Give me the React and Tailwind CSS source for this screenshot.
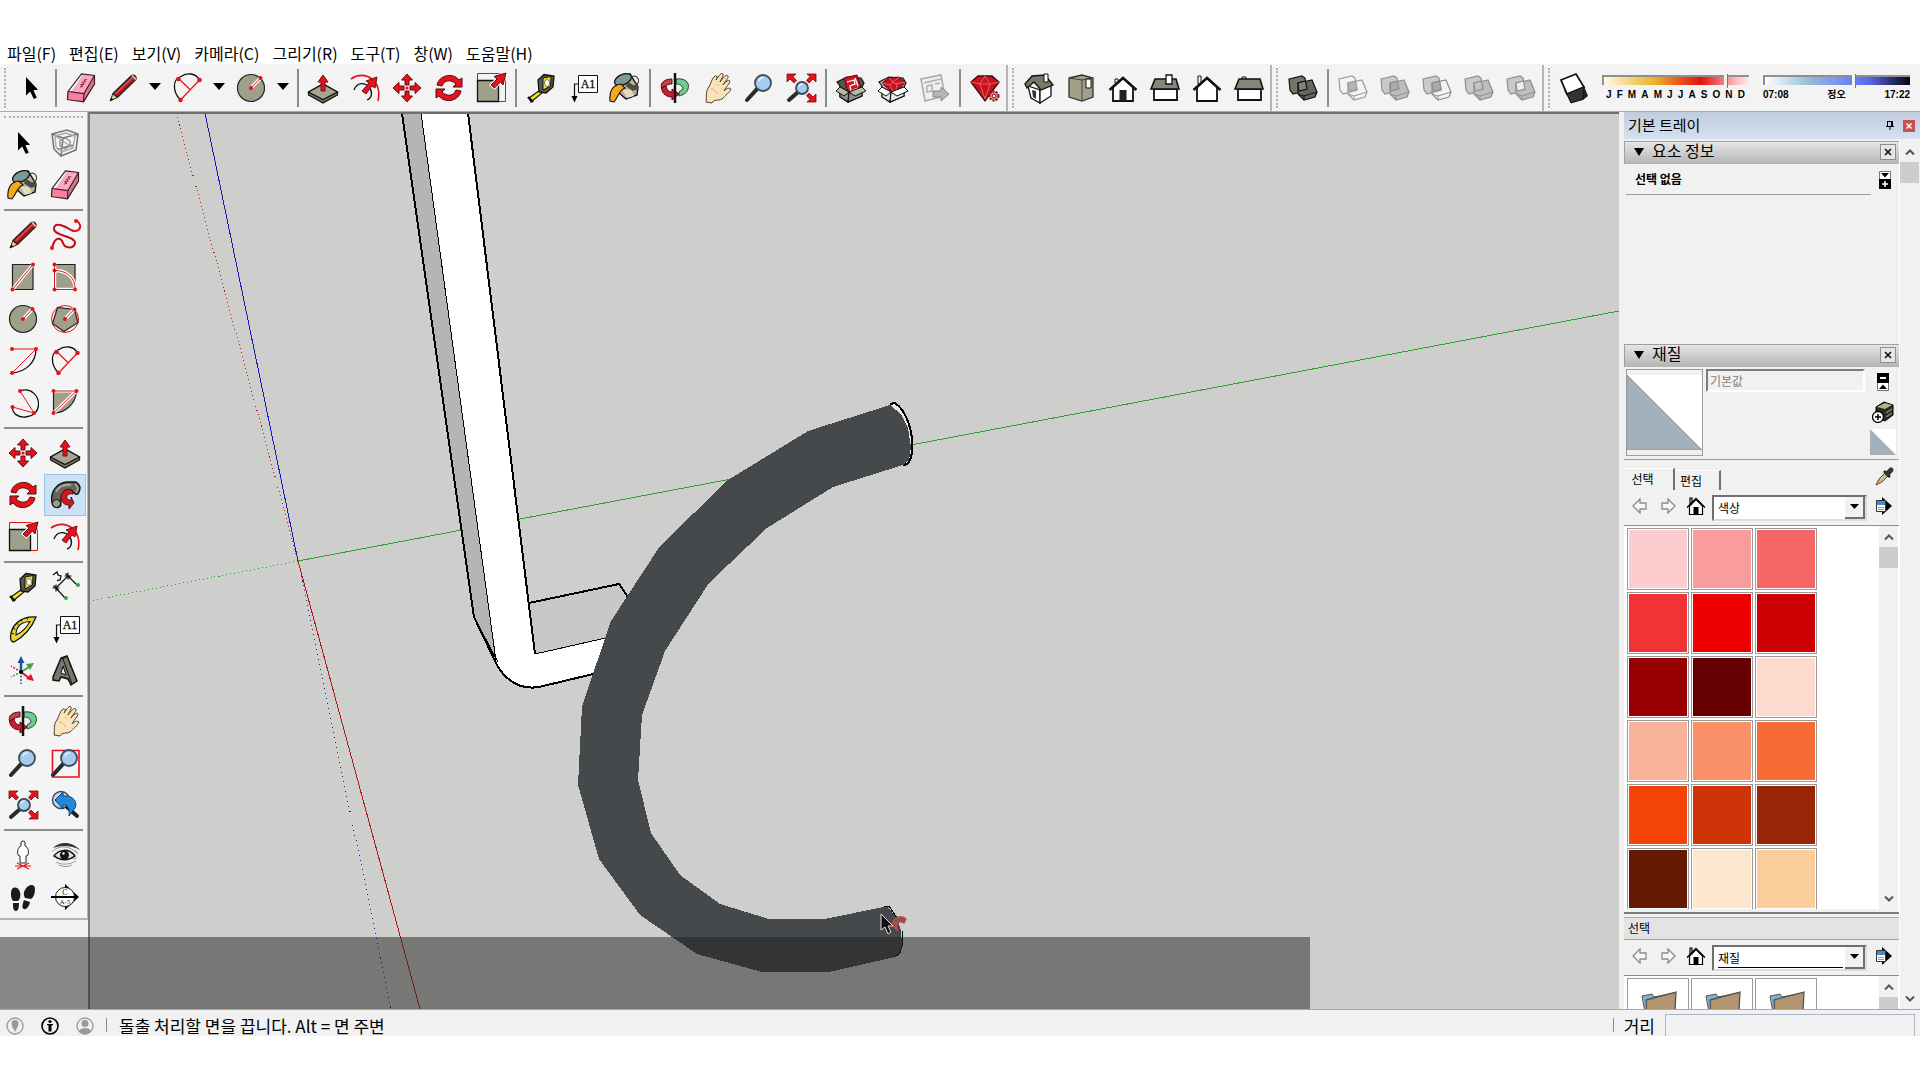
import React from 'react';

const RED = '#e1141e';
const OLIVE = '#9f9f8a';

function Icon({ children, className = 'h-8 w-8' }) {
  return (
    <svg viewBox="0 0 32 32" className={`${className} shrink-0`} fill="none" aria-hidden="true">
      {children}
    </svg>
  );
}

function Dots({ points, r = 2 }) {
  return points.map(([x, y]) => <circle key={`${x}-${y}`} cx={x} cy={y} r={r} fill={RED} />);
}

function SelectIcon() {
  return (
    <Icon>
      <path d="M11 5V23.5L15.2 19.6L18.8 27L21.8 25.6L18.4 18.2L23 17.8Z" fill="#000" />
    </Icon>
  );
}

function EraserIcon() {
  return (
    <Icon>
      <path d="M7 19L18 2.5L29.5 4L20 21.5Z" fill="#f9a9c0" />
      <path d="M20 21.5L29.5 4L29 12L18.5 30Z" fill="#d9728f" />
      <path d="M2 21.5L7 19L20 21.5L18.5 30L3 26.5Z" fill="#fb7f9c" />
      <path d="M3 19.5L16.5 2L29.5 3.5V12L18.5 29.8L2.5 27.5ZM3 19.5L19 21.5L29.5 3.5M19 21.5L18.5 29.8" stroke="#3a1a22" strokeWidth="1.2" />
      <path d="M15 15l3-.6-2.4-1.8 3.6-.4-2-2 3.4-.3-1.5-2 3-.2" stroke="#8a2540" strokeWidth="1" />
    </Icon>
  );
}

function PencilIcon() {
  return (
    <Icon>
      <path d="M3 29L6 21.5L10.5 25.5Z" fill="#e8cd9a" stroke="#222" />
      <path d="M6 21.5L24.5 3.5C27 2 30 4.5 29 7.5L10.5 25.5Z" fill="#a8181c" stroke="#222" strokeWidth="1.2" />
      <path d="M8.5 22L25.5 5.5" stroke="#e4504f" strokeWidth="1.6" />
      <path d="M25 3.5l4 4" stroke="#d9b0a8" strokeWidth="2" />
      <path d="M3 29l1.4-3.4 2 1.8z" fill="#111" />
    </Icon>
  );
}

function FreehandIcon() {
  return (
    <Icon>
      <path d="M3 29C6 17 12 18 14 24C16 30 25 30 26 24C27 17 5 17 5 10C5 2 16 7 22 11C28 14 32 10 31 6C30 3 28 2 27 1" stroke={RED} strokeWidth="2" />
      <path d="M3 29C6 17 12 18 14 24C16 30 25 30 26 24C27 17 5 17 5 10C5 2 16 7 22 11" stroke="#7d0b12" strokeWidth=".7" />
      <Dots points={[[3, 29], [27, 2]]} />
    </Icon>
  );
}

function RectIcon() {
  return (
    <Icon>
      <path d="M5.5 3.5H26V28.5H5.5Z" fill={OLIVE} stroke="#222" strokeWidth="1.2" />
      <path d="M5.5 28.5L26 3.5" stroke="#fff" strokeWidth="3.4" />
      <path d="M5.5 28.5L26 3.5" stroke={RED} />
      <Dots points={[[5.5, 28.5], [26, 3.5]]} />
    </Icon>
  );
}

function RotatedRectIcon() {
  return (
    <Icon>
      <path d="M5.5 3.5H26V28.5H5.5Z" fill={OLIVE} stroke="#222" strokeWidth="1.2" />
      <path d="M5.5 3.5V28.5H26C27 17 17 9 5.5 9.5" stroke="#fff" strokeWidth="3.4" />
      <path d="M5.5 3.5V28.5H26C27 17 17 9 5.5 9.5" stroke={RED} />
      <Dots points={[[5.5, 3.5], [5.5, 9.5], [5.5, 28.5], [26, 28.5]]} />
    </Icon>
  );
}

function CircleIcon() {
  return (
    <Icon>
      <circle cx="16" cy="16" r="13.5" fill={OLIVE} stroke="#222" strokeWidth="1.2" />
      <path d="M16 16L25.5 6" stroke="#fff" strokeWidth="3.4" />
      <path d="M16 16L25.5 6" stroke={RED} />
      <Dots points={[[16, 16], [25.5, 6]]} />
    </Icon>
  );
}

function PolygonIcon() {
  return (
    <Icon>
      <circle cx="16" cy="16" r="13.5" stroke={RED} />
      <path d="M25.5 6.5L29 19.5L15 28.5L3.5 20.5L8.5 4.5Z" fill={OLIVE} stroke="#222" strokeWidth="1.2" />
      <path d="M16 16L25.5 6" stroke="#fff" strokeWidth="3.4" />
      <path d="M16 16L25.5 6" stroke={RED} />
      <Dots points={[[16, 16], [25.5, 6.5]]} />
    </Icon>
  );
}

function ArcIcon() {
  return (
    <Icon>
      <path d="M5 28C18 27 29 18 29 4" stroke="#111" strokeWidth="1.3" />
      <path d="M5 4H29L5 28" stroke={RED} />
      <Dots points={[[5, 4], [29, 4], [5, 28]]} />
    </Icon>
  );
}

function TwoPointArcIcon() {
  return (
    <Icon>
      <path d="M9.5 28C0 18 3 7 9 5C16 0 25 1 28.5 8" stroke="#111" strokeWidth="1.3" />
      <path d="M9.5 28L28.500 8M7.500 6.500L19.500 18" stroke={RED} strokeWidth="1.2" />
      <Dots points={[[9.5, 28], [28.5, 8], [7.5, 7]]} r={2.3} />
    </Icon>
  );
}

function ThreePointArcIcon() {
  return (
    <Icon>
      <path d="M13 4C24 0 32 9 31.5 18C31 25 26 29 19 30C11 31 5 26 5.5 20" stroke="#111" strokeWidth="1.3" />
      <path d="M13 4L27 26L5.5 20" stroke={RED} />
      <Dots points={[[13, 4], [27, 26], [5.5, 20]]} />
    </Icon>
  );
}

function PieIcon() {
  return (
    <Icon>
      <path d="M4.5 4H27.5C27 16 17 26 4.5 26Z" fill={OLIVE} stroke="#222" strokeWidth="1.2" />
      <path d="M27.5 4H4.500M27.500 4L4.500 26" stroke="#fff" strokeWidth="3.2" />
      <path d="M4.5 4H27.5L4.5 26" stroke={RED} />
      <Dots points={[[4.5, 4], [27.5, 4], [4.5, 26]]} />
    </Icon>
  );
}

function PushPullIcon() {
  return (
    <Icon>
      <path d="M1.5 20L16 12L30.5 20V23L16 31L1.5 23Z" fill="#6f6f60" stroke="#111" strokeWidth="1.2" />
      <path d="M1.5 20L16 12L30.5 20L16 27.5Z" fill="#a5a592" stroke="#111" strokeWidth="1.2" />
      <path d="M16 3L21 10H18V19H14V10H11Z" fill={RED} stroke="#7d0b12" />
    </Icon>
  );
}

function OffsetIcon() {
  return (
    <Icon>
      <path d="M2 7C16-3 34 9 29 29" stroke={RED} strokeWidth="1.6" />
      <path d="M5 18C8 10 16 10 20 15C24 20 23 26 18 28" stroke="#111" strokeWidth="1.3" />
      <path d="M13 19L20 11L17 9L28 5L26 16L23 14L17 22Z" fill={RED} stroke="#7d0b12" />
    </Icon>
  );
}

function MoveIcon() {
  return (
    <Icon>
      {[0, 90, 180, 270].map((angle) => (
        <path key={angle} transform={`rotate(${angle} 16 16)`} d="M16 2L21.5 8H18V13H14V8H10.5Z" fill={RED} stroke="#6d0a10" />
      ))}
      <circle cx="16" cy="16" r="1.6" fill={RED} />
    </Icon>
  );
}

function RotateIcon() {
  return (
    <Icon>
      <path d="M4 13C6 3 20 0 26 8L29 6V15H20L23 12C18 7 11 8 9 14Z" fill={RED} stroke="#5b080d" />
      <path d="M28 19C26 29 12 32 6 24L3 26V17H12L9 20C14 25 21 24 23 18Z" fill={RED} stroke="#5b080d" />
    </Icon>
  );
}

function FollowMeIcon() {
  return (
    <Icon>
      <path d="M3 24C1 13 7 4 18 3L27 3C31 5 32 9 30 13C29 16 27 16 25 14L22 11C15 9 11 15 12 25C12 30 4 30 3 24Z" fill="#66665c" stroke="#111" strokeWidth="1.3" />
      <path d="M7 13C10 7 15 5 22 6" stroke="#a9a99a" strokeWidth="2" />
      <path d="M12 17C13 12 18 9 23 11L24 15C20 14 17 16 18 20L22 22V18L25 24L20 30V26C15 26 12 23 12 17Z" fill="#d11a22" stroke="#5b080d" />
      <ellipse cx="7.5" cy="24.5" rx="4" ry="4" fill="#9c9c8c" stroke="#111" />
      <path d="M26 5l3 4-2 5" stroke="#a9a99a" strokeWidth="1.5" />
    </Icon>
  );
}

function ScaleIcon() {
  return (
    <Icon>
      <path d="M2.5 1.5H30.5V29.5H2.5Z" stroke={RED} />
      <path d="M2.5 8.5H23.5V29.5H2.5Z" fill={OLIVE} stroke="#111" strokeWidth="1.3" />
      <path d="M16 13L22 7L19 4.5L31 1L28 13L25.5 10L19.5 16Z" fill={RED} stroke="#fff" strokeWidth="2.5" />
      <path d="M16 13L22 7L19 4.5L31 1L28 13L25.5 10L19.5 16Z" fill={RED} stroke="#5b080d" />
    </Icon>
  );
}

function TapeIcon() {
  return (
    <Icon>
      <path d="M4 26L15 18L17 21L6 30Z" fill="#f2e21b" stroke="#111" strokeWidth="1.2" />
      <path d="M3 25L8 30" stroke="#111" strokeWidth="2.4" />
      <path d="M13 8L19 2.5L29 4L28 15L21 21L14 20Z" fill="#55554d" stroke="#111" strokeWidth="1.3" />
      <path d="M18 6L26 4.5L25.5 14L18 18Z" fill="#f2e21b" stroke="#111" />
      <ellipse cx="22" cy="11" rx="2.5" ry="3.5" fill="#fff" stroke="#777" />
    </Icon>
  );
}

function DimensionIcon() {
  return (
    <Icon>
      <path d="M7 17L19 5M19 5L29 15M7 17L16 27" stroke="#111" strokeWidth="1.2" />
      <path d="M3.5 17h7M7 13.5v7M4.5 14.5l5 5M15.5 5h7M19 1.5v7M16.5 2.5l5 5" stroke="#111" strokeWidth="1.2" />
      <path d="M4 4l4-3 1 3 3 1-1 4-3 .5" stroke="#111" strokeWidth="1.3" />
      <circle cx="29" cy="14" r="2" fill="#3fa046" />
      <circle cx="17" cy="27" r="2" fill="#3fa046" />
    </Icon>
  );
}

function ProtractorIcon() {
  return (
    <Icon>
      <path d="M3.5 24C4 12 14 3 29 4C25 14 18 23 7 29C4 29 3.500 27 3.500 24Z" fill="#e8d53a" stroke="#111" strokeWidth="1.3" />
      <path d="M9 22C9 14 14 9 23 8.5C20 14 16 19 9 22Z" fill="#f3f3f3" stroke="#111" strokeWidth="1.1" />
      <path d="M4.500 20l2.500 1M6 15l2.500 1.500M9.500 10l2 2M14 6.500l1 2M20 4.500l.5 2" stroke="#111" />
    </Icon>
  );
}

function TextIcon() {
  return (
    <Icon>
      <path d="M11.5 3.5H30.5V20.5H11.5Z" fill="#fff" stroke="#111" />
      <path d="M11 12H7.5V25" stroke="#111" strokeWidth="1.2" />
      <path d="M4.5 24H10.5L7.5 30.5Z" fill="#000" />
      <text x="21" y="16" textAnchor="middle" fontFamily="Liberation Serif, serif" fontSize="12" fill="#111" stroke="#111" strokeWidth=".3">A1</text>
    </Icon>
  );
}

function AxesIcon() {
  return (
    <Icon>
      <path d="M14 17V6" stroke="#1d4fa5" strokeWidth="2.5" />
      <path d="M14 1l3.500 7h-7z" fill="#1d4fa5" />
      <path d="M14 17L22 12" stroke="#3fa046" strokeWidth="2" />
      <path d="M27 8l-8 1 4 6z" fill="#3fa046" />
      <path d="M14 17L22 23" stroke={RED} strokeWidth="2" />
      <path d="M27 26l-3-7-5 5z" fill={RED} />
      <path d="M14 17L4 11" stroke={RED} strokeWidth="1.5" strokeDasharray="2 1.5" />
      <path d="M14 17L4 22" stroke="#3fa046" strokeWidth="1.5" strokeDasharray="2 1.5" />
      <path d="M14 17V29" stroke="#1d4fa5" strokeWidth="1.5" strokeDasharray="2 1.5" />
      <circle cx="14" cy="17" r="2" fill="#000" />
    </Icon>
  );
}

function Text3dIcon() {
  return (
    <Icon>
      <path d="M4 22L12 3L18 1L28 26L22 30L19 24L12 22L10 26L4 25Z" fill="#76766a" stroke="#111" strokeWidth="1.5" />
      <path d="M12 18L14 11L17 20Z" fill="#f3f3f3" stroke="#111" />
      <path d="M14 4l9 25M12 3l2 1 4-3" stroke="#111" />
    </Icon>
  );
}

function PaintIcon() {
  return (
    <Icon>
      <path d="M8 8L21 2L29 15L28 23L17 27L10 21Z" fill="#b9b097" stroke="#111" strokeWidth="1.4" />
      <ellipse cx="14" cy="7.500" rx="9" ry="5" transform="rotate(-24 14 7.5)" fill="#7d979a" stroke="#111" strokeWidth="1.300" />
      <path d="M18 12L24 16L29 15" stroke="#4d4a40" strokeWidth="5" />
      <path d="M22 5C29 2 32 9 27 14" stroke="#444" strokeWidth="1.200" />
      <path d="M13 17L18 26L25 24L22 18Z" fill="#e3dcc2" />
      <path d="M1 29C0 20 3 13 12 12L16 16C10 18 10 24 5 30Z" fill="#f6a81c" stroke="#111" strokeWidth="1.1" />
    </Icon>
  );
}

function OrbitIcon() {
  return (
    <Icon>
      <path d="M17 7C26 6 31 10 29 17C28 21 24 23 20 24V20L24 17C24 14 21 12 17 12Z" fill="#74c894" stroke="#154d2a" />
      <path d="M13 7C5 7 1 11 2.5 16L7 14C9 12 11 12 13 12Z" fill="#bb4248" stroke="#5b080d" />
      <path d="M2.5 16C3 22 8 25 13 25V28L20 22L13 17V20C10 20 8 18 7 14Z" fill="#cb1c33" stroke="#5b080d" />
      <path d="M16 1V31" stroke="#111" strokeWidth="2.5" />
    </Icon>
  );
}

function PanIcon() {
  return (
    <Icon>
      <path d="M5 30C6 25 4 20 8 15C10 11 11 6 14 4C16 3 17 5 15 8C18 4 20 0 22 2C23 4 20 7 19 10C22 6 25 2 27 4C28 6 24 9 22 13C24 10 28 7 29 9C29 11 25 15 23 19C25 17 28 15 30 17C29 20 24 24 21 27C17 29 13 27 11 31Z" fill="#fbe3b9" stroke="#4c4130" />
      <path d="M10 17c3 0 5 2 6 5M16 12l2 2" stroke="#d7b47c" />
    </Icon>
  );
}

function Lens({ x = 20, y = 11, r = 8, ex = 4, ey = 28 }) {
  return (
    <>
      <path d={`M${x - r * 0.7} ${y + r * 0.7}L${ex} ${ey}`} stroke="#2a2a2a" strokeWidth="4" strokeLinecap="round" />
      <circle cx={x} cy={y} r={r} fill="#a5cbee" stroke="#3a4b5c" strokeWidth="1.8" />
      <path d={`M${x - r * 0.5} ${y - r * 0.2}a${r * 0.6} ${r * 0.6} 0 0 1 ${r * 0.6} ${-r * 0.45}`} stroke="#e5f2fb" strokeWidth="1.5" />
    </>
  );
}

function ZoomIcon() {
  return (
    <Icon>
      <Lens />
    </Icon>
  );
}

function ZoomWindowIcon() {
  return (
    <Icon>
      <path d="M3.5 3.5H30V30H3.5Z" stroke={RED} strokeWidth="1.6" />
      <Lens />
    </Icon>
  );
}

function ZoomExtentsIcon() {
  return (
    <Icon>
      <Lens x={17} y={16} r={6} />
      <path d="M2 2h9l-3 2.5 3.500 4-2.500 2.500-4-4-3 3z" fill={RED} stroke="#7d0b12" strokeWidth=".8" />
      <path d="M31 2h-9l3 2.5-3.500 4 2.500 2.500 4-4 3 3z" fill={RED} stroke="#7d0b12" strokeWidth=".8" />
      <path d="M31 30h-9l3-2.5-3.500-4 2.500-2.500 4 4 3-3z" fill={RED} stroke="#7d0b12" strokeWidth=".8" />
    </Icon>
  );
}

function PreviousViewIcon() {
  return (
    <Icon>
      <circle cx="12" cy="11" r="8.5" fill="#c5daea" stroke="#3a4b5c" strokeWidth="1.5" />
      <path d="M18 18L28 27" stroke="#222" strokeWidth="4" strokeLinecap="round" />
      <path d="M6 11L14 3V7C24 6 29 13 26 19L20 27C21 20 19 16 14 16V20Z" fill="#2387dd" stroke="#0f3e70" />
    </Icon>
  );
}

function CameraIcon() {
  return (
    <Icon>
      <path d="M14 4a2 2 0 1 1 4 0v3c3 1 4 5 3 9l-2 1v7h-6v-7l-2-1c-1-4 0-8 3-9z" fill="#fff" stroke="#222" />
      <path d="M10 24L22 30M22 24L10 30M8 27H24" stroke={RED} strokeWidth="1.2" />
    </Icon>
  );
}

function EyeIcon() {
  return (
    <Icon>
      <path d="M4 9C11 2 23 2 31 11C23 6 12 6 4 9Z" fill="#333" />
      <path d="M5 17C10 10 20 9 26 17C19 22 12 22 5 17Z" fill="#ddd" stroke="#111" strokeWidth="1.5" />
      <circle cx="15.5" cy="16" r="4.5" fill="#111" />
      <circle cx="14.5" cy="14.5" r="1.2" fill="#fff" />
      <path d="M3 13C9 6 21 6 29 15M7 23c6 3 13 3 20-1M10 26c5 2 9 2 13 0M26 11l3 4M24 20l4-1" stroke="#999" />
    </Icon>
  );
}

function WalkIcon() {
  return (
    <Icon>
      <path d="M4 12C4 5 11 5 13 11C14 15 13 18 11 20L6 20C4 17 4 15 4 12ZM6 22L12 22C12 27 11 30 9 30C6 30 6 26 6 22Z" fill="#1b1b1b" />
      <path d="M28 8C28 2 21 3 18 9C16 12 17 15 18 17L24 18C27 16 28 12 28 8ZM17 19L23 21C22 26 19 29 17 28C14 27 16 22 17 19Z" fill="#1b1b1b" />
      <path d="M5 21h7M17 18l7 2" stroke="#fff" strokeWidth="1.5" strokeDasharray="2 1" />
    </Icon>
  );
}

function SectionIcon() {
  return (
    <Icon>
      <path d="M16 3L30 16L16 29Z" fill="#000" />
      <circle cx="16" cy="16" r="9.5" fill="#fff" stroke="#222" />
      <path d="M2 16H29" stroke="#000" strokeWidth="2" />
      <text x="16" y="14" textAnchor="middle" fontFamily="Liberation Serif, serif" fontSize="8" fill="#111">C</text>
      <text x="16" y="23" textAnchor="middle" fontFamily="Liberation Serif, serif" fontSize="7" fill="#111">A-5</text>
    </Icon>
  );
}

function ComponentIcon() {
  return (
    <Icon>
      <path d="M3 7L18 3L29 7L27 23L12 29L5 22ZM3 7L14 11L12 29M14 11L29 7" stroke="#777" strokeWidth="1.6" />
      <path d="M6 9L17 6L26 9L24 21L13 25L7 20ZM6 9L14 14L24 21" stroke="#aaa" strokeWidth="1.4" />
      <path d="M11 14l5-3 5 3v5l-5 3-5-3zM8 22l16-4" stroke="#8c8c8c" strokeWidth="1.3" />
    </Icon>
  );
}

function WarehouseIcon({ gem = false }) {
  const box = gem ? '#e6e6e6' : '#8f8f80';
  return (
    <Icon>
      <path d="M5 14L2 10L12 5L26 6L29 11L27 15V24L13 30L5 25Z" fill={gem ? '#bdbdbd' : '#55554c'} stroke="#111" strokeWidth="1.2" />
      {gem ? (
        <>
          <path d="M5 11L12 6L22 5L28 10L18 23Z" fill="#c1121d" stroke="#4a0609" />
          <path d="M5 11L13 13L22 5M12 6L18 12L28 10M13 13L18 23L20 12" stroke="#f0656b" />
        </>
      ) : (
        <>
          <path d="M9 6L22 3L27 19L14 24Z" fill="#d2151f" stroke="#5b080d" />
          <path d="M12 10l7-2 1 4-5 2 1 5M20 6l3 8M18 18l5-2" stroke="#fff" strokeWidth="1.3" />
        </>
      )}
      <path d="M5 15L14 20L13 30L5 25Z" fill={box} stroke="#111" strokeWidth="1.1" />
      <path d="M14 21L27 15V24L13 30Z" fill={box} stroke="#111" strokeWidth="1.1" />
      <path d="M5 15L1 19L9 24L14 20ZM27 15L31 19L20 24L14 20Z" fill={gem ? '#fff' : '#b7b7a8'} stroke="#111" />
    </Icon>
  );
}

function ShareIcon() {
  return (
    <Icon>
      <path d="M2 7L22 3L26 24L6 29Z" fill="#eee" stroke="#aaa" strokeWidth="1.5" />
      <path d="M5 11L22 7M8 14l5-1v6l-5 1zM16 12l5-1" stroke="#b0b0b0" strokeWidth="1.5" />
      <path d="M14 19H22V15L30 22L22 29V25H14Z" fill="#b5b5b5" stroke="#888" />
    </Icon>
  );
}

function ExtensionIcon() {
  return (
    <Icon>
      <path d="M2 10L9 4H23L30 10L16 29Z" fill="#c31420" stroke="#4a0609" strokeWidth="1.3" />
      <path d="M2 10L11 12L16 4L21 12L30 10M11 12L16 27L21 12Z" stroke="#f0565d" />
      <circle cx="25" cy="24" r="4.5" fill="#d98d90" stroke="#8b141a" strokeWidth="2" strokeDasharray="2 1.2" />
      <circle cx="25" cy="24" r="1.8" fill="#fff" stroke="#8b141a" />
    </Icon>
  );
}

function IsoIcon() {
  return (
    <Icon>
      <path d="M5 14L17 18V31L8 26Z" fill="#fff" stroke="#111" strokeWidth="1.3" />
      <path d="M17 18L28 11V24L17 31Z" fill="#fff" stroke="#111" strokeWidth="1.3" />
      <path d="M2 12L9 4L22 3L30 13L18 18L11 10L4 16Z" fill="#77776a" stroke="#111" strokeWidth="1.3" />
      <path d="M21 2h4v8h-4z" fill="#fff" stroke="#111" />
      <path d="M9 18l4 1v8l-3-2z" fill="#333" />
    </Icon>
  );
}

function TopIcon() {
  return (
    <Icon>
      <path d="M4 6L17 3L28 6V25L17 29L4 25Z" fill={OLIVE} stroke="#333" strokeWidth="1.3" />
      <path d="M17 8V29M4 6L17 8L28 6" stroke="#44443c" />
      <path d="M21 7h5v9h-5z" fill="#fff" stroke="#111" />
    </Icon>
  );
}

function HouseIcon({ door = false }) {
  return (
    <Icon>
      {!door && <path d="M7 4h3v8H7z" fill="#fff" stroke="#111" />}
      {door && <path d="M8 7h3v4H8z" fill="#fff" stroke="#111" />}
      <path d="M6 15L16 6L26 15V29H6Z" fill="#fff" stroke="#111" strokeWidth="1.8" />
      <path d="M2.5 18L16 6L29.5 18" stroke="#111" strokeWidth="2.5" />
      {door && <path d="M12.5 18H19.5V29H12.5Z" fill="#222" />}
    </Icon>
  );
}

function SideIcon({ chimney = 'right' }) {
  return (
    <Icon>
      <path d="M5 17H28V28H5Z" fill="#fff" stroke="#111" strokeWidth="1.8" />
      {chimney === 'left' && <path d="M9 5h4v4H9z" fill="#fff" stroke="#111" />}
      <path d="M6 7H27L30 17H2Z" fill="#85857a" stroke="#111" strokeWidth="1.6" />
      {chimney === 'right' && <path d="M17 3h6v9h-6z" fill="#fff" stroke="#111" strokeWidth="1.3" />}
    </Icon>
  );
}

function SolidIcon({ a = '#c9c9c9', b = '#bdbdbd', stroke = '#8e8e8e', mid = 'none' }) {
  return (
    <Icon>
      <path d="M2 7L15 4L18 6L20 18L6 22L3 18Z" fill={a} stroke={stroke} strokeWidth="1.2" />
      <path d="M11 11L25 8L30 20L28 25L17 28L11 22Z" fill={b} stroke={stroke} strokeWidth="1.2" />
      <path d="M11 22L17 24L30 20M17 24V28" stroke={stroke} />
      <path d="M11 11L18.500 9L20 17L12 19Z" fill={mid} stroke={stroke} strokeWidth="1.2" />
    </Icon>
  );
}

function ShadowIcon() {
  return (
    <Icon>
      <path d="M5 18L25 14L29 24L24 28L12 31Z" fill="#222" />
      <path d="M2 8L17 2L25 15L8 22Z" fill="#fff" stroke="#111" strokeWidth="1.8" />
      <path d="M8 22L12 31L24 27L25 15Z" fill="#333" stroke="#111" />
    </Icon>
  );
}

const UnionIcon = () => <SolidIcon a="#74746a" b="#66665b" stroke="#111" mid="#83837a" />;

const toolbarGroups = [
  [
    ['선택', SelectIcon], '|', ['지우개', EraserIcon], ['선', PencilIcon, true], ['호', TwoPointArcIcon, true], ['원', CircleIcon, true], '|',
    ['밀기/당기기', PushPullIcon], ['간격띄우기', OffsetIcon], ['이동', MoveIcon], ['회전', RotateIcon], ['배율', ScaleIcon], '|',
    ['줄자', TapeIcon], ['텍스트', TextIcon], ['페인트 통', PaintIcon], '|',
    ['궤도', OrbitIcon], ['이동 보기', PanIcon], ['확대', ZoomIcon], ['범위 확대', ZoomExtentsIcon], '|',
    ['3D Warehouse', WarehouseIcon], ['Extension Warehouse', () => <WarehouseIcon gem />], ['모델 공유', ShareIcon], '|',
    ['확장 관리자', ExtensionIcon],
  ],
  [
    ['등각', IsoIcon], ['맨 위', TopIcon], ['앞', () => <HouseIcon door />], ['오른쪽', SideIcon], ['뒤', HouseIcon],
    ['왼쪽', () => <SideIcon chimney="left" />],
  ],
  [
    ['외피', UnionIcon], '|',
    ['교차', () => <SolidIcon a="none" b="none" mid="#b5b5b5" stroke="#999" />],
    ['결합', () => <SolidIcon mid="#aaa" />],
    ['빼기', () => <SolidIcon b="none" mid="#aaa" />],
    ['트림', () => <SolidIcon mid="#c4c4c4" />],
    ['분할', () => <SolidIcon mid="#eee" />],
  ],
];

const paletteGroups = [
  [['선택', SelectIcon], ['구성요소', ComponentIcon], ['페인트 통', PaintIcon], ['지우개', EraserIcon]],
  [
    ['선', PencilIcon], ['자유곡선', FreehandIcon], ['사각형', RectIcon], ['회전된 사각형', RotatedRectIcon], ['원', CircleIcon],
    ['다각형', PolygonIcon], ['호', ArcIcon], ['2점 호', TwoPointArcIcon], ['3점 호', ThreePointArcIcon], ['원형 차트', PieIcon],
  ],
  [['이동', MoveIcon], ['밀기/당기기', PushPullIcon], ['회전', RotateIcon], ['따라가기', FollowMeIcon, true], ['배율', ScaleIcon], ['간격띄우기', OffsetIcon]],
  [['줄자', TapeIcon], ['치수', DimensionIcon], ['각도기', ProtractorIcon], ['텍스트', TextIcon], ['축', AxesIcon], ['3D 텍스트', Text3dIcon]],
  [['궤도', OrbitIcon], ['이동 보기', PanIcon], ['확대', ZoomIcon], ['창 확대', ZoomWindowIcon], ['범위 확대', ZoomExtentsIcon], ['이전', PreviousViewIcon]],
  [['카메라 배치', CameraIcon], ['둘러보기', EyeIcon], ['걷기', WalkIcon], ['단면', SectionIcon]],
];

const menus = ['파일(F)', '편집(E)', '보기(V)', '카메라(C)', '그리기(R)', '도구(T)', '창(W)', '도움말(H)'];

const swatches = [
  'bg-[#fccdce]', 'bg-[#fa9b9d]', 'bg-[#f66667]',
  'bg-[#f23336]', 'bg-[#ee0000]', 'bg-[#cd0004]',
  'bg-[#990003]', 'bg-[#660003]', 'bg-[#fddacd]',
  'bg-[#fab39b]', 'bg-[#fa9067]', 'bg-[#f76b35]',
  'bg-[#f34306]', 'bg-[#ce3408]', 'bg-[#982606]',
  'bg-[#661a04]', 'bg-[#fde6ce]', 'bg-[#fbcd9a]',
];

function ToolButton({ label, icon: Glyph, active = false }) {
  return (
    <button
      type="button"
      aria-label={label}
      className={[
        'flex h-[42px] w-[42px] items-center justify-center border',
        active ? 'border-[#9ac5ea] bg-[#cbe2f6]' : 'border-transparent',
      ].join(' ')}
    >
      <Glyph />
    </button>
  );
}

function Toolbar() {
  return (
    <div className="flex h-12 shrink-0 items-stretch border-b border-[#a8a8a8] bg-[#f3f3f3] pt-px">
      {toolbarGroups.map((group, i) => (
        <div key={i} className="flex items-center border-r-2 border-[#b4b4b4]">
          <div className="mr-1 ml-1 h-10 border-l-2 border-dotted border-[#b0b0b0]" />
          {group.map((item, j) => {
            if (item === '|') {
              return <div key={j} className="mx-[3px] h-[38px] w-0.5 bg-[#8c8c8c]" />;
            }
            const [label, Glyph, split] = item;
            return (
              <div key={j} className="flex items-center">
                <ToolButton label={label} icon={Glyph} />
                {split ? (
                  <button type="button" aria-label={`${label} 목록`} className="flex w-[22px] justify-center pb-1">
                    <svg viewBox="0 0 12 7" className="h-[7px] w-3" aria-hidden="true">
                      <path d="M0 0H12L6 7Z" fill="#000" />
                    </svg>
                  </button>
                ) : null}
              </div>
            );
          })}
        </div>
      ))}

      <div className="flex flex-1 items-center pr-2.5">
        <div className="mr-1 ml-1 h-10 border-l-2 border-dotted border-[#b0b0b0]" />
        <ToolButton label="그림자" icon={ShadowIcon} />
        <div className="flex flex-1 gap-3.5 pl-1.5 font-['Liberation_Sans','Noto_Sans_CJK_KR',sans-serif] text-[10px] leading-3 font-bold text-black">
          <div className="flex-1">
            <input
              type="range"
              aria-label="날짜"
              min="0"
              max="100"
              defaultValue="85"
              className="block h-2.5 w-full appearance-none border-t-2 border-l-2 border-[#8f8f8f] [background-image:linear-gradient(to_right,#fffbe8,#f2cf74_20%,#eeb02b_35%,#e8561c_52%,#e3120f_67%,#f26a6e_80%,#f7b6bb_90%,#ffecee)] [&::-webkit-slider-thumb]:h-3.5 [&::-webkit-slider-thumb]:w-1 [&::-webkit-slider-thumb]:appearance-none [&::-webkit-slider-thumb]:border-r [&::-webkit-slider-thumb]:border-[#777] [&::-webkit-slider-thumb]:bg-[#f3f3f3]"
            />
            <div className="mt-1 flex justify-between px-1">
              {'JFMAMJJASOND'.split('').map((month, i) => (
                <span key={i}>{month}</span>
              ))}
            </div>
          </div>
          <div className="flex-1">
            <input
              type="range"
              aria-label="시간"
              min="0"
              max="100"
              defaultValue="62"
              className="block h-2.5 w-full appearance-none border-t-2 border-l-2 border-[#8f8f8f] [background-image:linear-gradient(to_right,#fff,#93bdd8_30%,#6d86f2_58%,#5c66ec_72%,#20265c_90%,#05050a)] [&::-webkit-slider-thumb]:h-3.5 [&::-webkit-slider-thumb]:w-1 [&::-webkit-slider-thumb]:appearance-none [&::-webkit-slider-thumb]:border-r [&::-webkit-slider-thumb]:border-[#777] [&::-webkit-slider-thumb]:bg-[#f3f3f3]"
            />
            <div className="mt-1 flex justify-between">
              <span>07:08</span>
              <span>정오</span>
              <span>17:22</span>
            </div>
          </div>
        </div>
      </div>
    </div>
  );
}

function Palette() {
  return (
    <div className="w-[90px] shrink-0 border-r-2 border-[#7b7b7b] bg-[#f1f1f1]">
      <div className="border-r border-b-2 border-[#b4b4b4] bg-[#f4f4f4] px-0.5 pt-1">
        <div className="mx-0.5 mb-1 border-t-2 border-dotted border-[#b0b0b0]" />
        {paletteGroups.map((group, i) => (
          <div key={i}>
            {i > 0 ? <div className="mx-0.5 my-[3px] h-0.5 bg-[#8c8c8c]" /> : null}
            <div className="grid grid-cols-[42px_42px]">
              {group.map(([label, Glyph, active]) => (
                <ToolButton key={label} label={label} icon={Glyph} active={active} />
              ))}
            </div>
          </div>
        ))}
      </div>
    </div>
  );
}

function Viewport() {
  return (
    <div className="min-w-0 flex-1 border-t-2 border-[#6e6e6c] bg-[#cececc]">
      <svg viewBox="90 114 1529 895" preserveAspectRatio="xMinYMin slice" className="block h-full w-full" fill="none" shapeRendering="crispEdges" aria-label="모델">
        <path d="M176 113L298 561" stroke="#b02020" strokeDasharray="1 3" />
        <path d="M298 561L89 601" stroke="#2f9a2f" strokeDasharray="1 3" />
        <path d="M298 561L391 1009" stroke="#1c1c90" strokeDasharray="1 4" />
        <path d="M298 561L1619 311" stroke="#30a030" />
        <path d="M205 113L298 561" stroke="#1a1ab4" />
        <path d="M298 561L420 1009" stroke="#b01818" />

        <path d="M529 603L619 584L640 610V640L535 655Z" fill="#c8c8c8" />
        <path d="M402 113H422L497 664L474 617Z" fill="#b5b5b5" />
        <path d="M421 113H468L535 654L610 637V670L539 687C520 690 507 682 497 665Z" fill="#fff" />
        <path d="M421 113L496 661M474 617L498 662M535 654L610 637" stroke="#000" />
        <path d="M402 113L474 617L497 665C507 682 520 690 539 687L610 670M468 113L535 654M529 603L619 584L630 600" stroke="#000" strokeWidth="2" />

        <path d="M890 404L895 403C906 410 914 432 912 452C911 460 908 465 903 465" fill="#e8e8e8" stroke="#000" strokeWidth="2" />
        <path
          d="M890 405L808 431L728 480L660 546L611 621L582 706L578 785L599 859L640 915L697 954L762 972H829L895 957L900 952L902 945L901 931L897 918L888 907H883L825 919L769 919L720 904L680 875L651 833L638 780L642 715L665 651L709 583L767 528L833 487L903 465L909 460L911 447L908 428L901 414Z"
          fill="#45494b"
        />
        <path d="M884 907L889 906L897 918M902 931V946L900 953L895 957" stroke="#000" />

        <g shapeRendering="auto">
          <path d="M893 926C891 919 900 914 906 919L904 923C899 920 896 923 897 930Z" fill="#7d5a52" stroke="#d0443e" strokeWidth="1.5" />
          <path d="M881 914V930L885 927L888 934L891 932L888 926H893Z" fill="#111" stroke="#ddd" />
        </g>
      </svg>
    </div>
  );
}

function CloseButton({ label }) {
  return (
    <button type="button" aria-label={label} className="flex h-4 w-4 items-center justify-center border border-[#8e8e8e] bg-[#e6e6e6]">
      <svg viewBox="0 0 8 8" className="h-2 w-2" aria-hidden="true">
        <path d="M1 1L7 7M7 1L1 7" stroke="#111" strokeWidth="1.6" />
      </svg>
    </button>
  );
}

function SectionHeader({ title }) {
  return (
    <div className="flex h-[23px] shrink-0 items-center border-t border-l border-[#a0a0a0] bg-linear-to-b from-[#e6e6e6] to-[#b4b4b4] pr-[3px] pb-0.5 pl-[9px]">
      <svg viewBox="0 0 10 8" className="h-2 w-2.5" aria-hidden="true">
        <path d="M0 0H10L5 8Z" fill="#000" />
      </svg>
      <h2 className="ml-2 flex-1 pb-1 text-[16px] leading-4 text-black">{title}</h2>
      <CloseButton label={`${title} 닫기`} />
    </div>
  );
}

function Chevron({ up = false }) {
  return (
    <svg viewBox="0 0 10 6" className="h-1.5 w-2.5" fill="none" aria-hidden="true">
      <path d={up ? 'M1 5.5L5 1.5L9 5.5' : 'M1 .5L5 4.5L9 .5'} stroke="#555" strokeWidth="2" />
    </svg>
  );
}

function ScrollBar({ down = true }) {
  return (
    <div className="flex w-[19px] shrink-0 flex-col items-center bg-[#f1f1f1]">
      <button type="button" aria-label="위로 스크롤" className="flex h-[21px] shrink-0 items-center">
        <Chevron up />
      </button>
      <div className="h-[21px] w-full shrink-0 bg-[#cdcdcd]" />
      {down ? (
        <button type="button" aria-label="아래로 스크롤" className="mt-auto flex h-[21px] items-center">
          <Chevron />
        </button>
      ) : null}
    </div>
  );
}

function ToggleIcon({ down = false }) {
  return (
    <svg viewBox="0 0 12 18" className="h-[18px] w-3" aria-hidden="true">
      <path d="M.5 .5H11.5V17.5H.5Z" fill="#fff" stroke="#777" />
      {down ? (
        <>
          <path d="M2 2H10L6 6.5ZM0 8H12V18H0Z" fill="#000" />
          <path d="M3 13H9M6 10V16" stroke="#fff" strokeWidth="1.5" />
        </>
      ) : (
        <>
          <path d="M0 0H12V10H0ZM2 16H10L6 11.5Z" fill="#000" />
          <path d="M3 5H9" stroke="#fff" strokeWidth="2" />
        </>
      )}
    </svg>
  );
}

function NavRow({ id, options, focused = false }) {
  return (
    <div className="flex h-9 shrink-0 items-center border-b border-[#8e8e8e] pr-1.5 pl-2">
      {[false, true].map((flip) => (
        <button key={String(flip)} type="button" aria-label={flip ? '앞으로' : '뒤로'} className="flex w-7 justify-start pb-1">
          <svg viewBox="0 0 16 16" className="h-4 w-4" fill="#f6f6f6" aria-hidden="true">
            <path d={flip ? 'M15 8L8 1V5H2V11H8V15Z' : 'M1 8L8 1V5H14V11H8V15Z'} stroke="#8a8a8a" strokeWidth="1.3" />
          </svg>
        </button>
      ))}
      <button type="button" aria-label="모델 내" className="mr-1.5 -ml-0.5 pb-1">
        <svg viewBox="0 0 20 20" className="h-5 w-5" fill="#fff" aria-hidden="true">
          <path d="M4 2H6V8H4ZM3.5 10L10 3.5L16.5 10V18.5H3.5Z" stroke="#000" strokeWidth="1.2" />
          <path d="M1 11.5L10 2.5L19 11.5" fill="none" stroke="#000" strokeWidth="1.3" />
          <path d="M7.500 11H12.500V18H7.500Z" fill="#000" />
        </svg>
      </button>
      <div className="relative flex-1">
        <select
          id={id}
          aria-label="재질 모음"
          className="block h-[26px] w-full appearance-none border-2 border-[#707070] border-r-[#dcdcdc] border-b-[#dcdcdc] bg-white pl-1 text-[12px] leading-5 text-black"
        >
          {options.map((option) => (
            <option key={option}>{option}</option>
          ))}
        </select>
        {focused ? <div className="pointer-events-none absolute right-6 bottom-[3px] left-1.5 h-px bg-black" /> : null}
        <div className="pointer-events-none absolute top-0.5 right-0.5 bottom-0.5 flex w-5 items-center justify-center border-r-2 border-b-2 border-[#707070] bg-[#f1f1f1]">
          <svg viewBox="0 0 9 5" className="h-[5px] w-[9px]" aria-hidden="true">
            <path d="M0 0H9L4.5 5Z" fill="#000" />
          </svg>
        </div>
      </div>
      <button type="button" aria-label="세부정보" className="ml-2 pb-1">
        <svg viewBox="0 0 18 18" className="h-[18px] w-[18px]" aria-hidden="true">
          <path d="M7 0L17 9L7 18Z" fill="#000" />
          <path d="M1.5 3.5H10.5V14.5H1.5Z" fill="#fff" stroke="#333" />
          <path d="M2 4H10V8H2Z" fill="#4b86cf" />
          <path d="M3 10.5H9M3 12.5H9" stroke="#999" />
        </svg>
      </button>
    </div>
  );
}

function Folder() {
  return (
    <svg viewBox="0 0 60 60" className="h-full w-full" aria-hidden="true">
      <path d="M14 17L24 15L26 18L46 14V50H20Z" fill="#7fb0d6" stroke="#555" />
      <path d="M18 21L48 13L46 50H20Z" fill="#b39670" stroke="#555" strokeWidth="1.3" />
    </svg>
  );
}

function Tray() {
  return (
    <aside className="ml-[5px] flex w-[296px] shrink-0 flex-col bg-[#f1f1f1]">
      <div className="flex h-[27px] shrink-0 items-center bg-linear-to-b from-[#c0ccdc] to-[#d5e1f0] pr-[5px] pl-1">
        <h1 className="flex-1 pb-0.5 text-[15px] leading-5 text-black">기본 트레이</h1>
        <button type="button" aria-label="고정" className="mr-[9px]">
          <svg viewBox="0 0 8 9" className="h-[9px] w-2" fill="none" aria-hidden="true">
            <path d="M1.500 0V5M2 .5H6M0 5.5H8M4 6V9" stroke="#000" />
            <path d="M6 0V5" stroke="#000" strokeWidth="2" />
          </svg>
        </button>
        <button type="button" aria-label="트레이 닫기" className="flex h-3 w-3 items-center justify-center bg-[#c75050]">
          <svg viewBox="0 0 6 6" className="h-1.5 w-1.5" aria-hidden="true">
            <path d="M.5 .5L5.5 5.5M5.5 .5L.5 5.5" stroke="#fff" strokeWidth="1.5" />
          </svg>
        </button>
      </div>

      <div className="flex min-h-0 flex-1">
        <div className="flex min-w-0 flex-1 flex-col border-r border-white pt-0.5">
          <SectionHeader title="요소 정보" />
          <div className="h-[180px] shrink-0 pr-2 pl-0.5">
            <div className="flex">
              <p className="h-[31px] flex-1 border-b border-[#9c9c9c] pl-[9px] text-[12px] leading-[30px] font-bold text-black">선택 없음</p>
              <button type="button" aria-label="세부정보 표시" className="ml-2">
                <ToggleIcon down />
              </button>
            </div>
          </div>

          <SectionHeader title="재질" />
          <div className="flex h-[93px] shrink-0 items-start border-b border-[#9c9c9c] pt-0.5 pr-[3px] pl-0.5">
            <div className="h-[87px] w-[77px] border border-[#9c9c9c] py-[5px]">
              <svg viewBox="0 0 75 75" className="block h-[75px] w-[75px]" aria-hidden="true">
                <path d="M0 0H75V75H0Z" fill="#fff" />
                <path d="M0 0L75 75H0Z" fill="#a4b0b9" stroke="#8e979e" />
              </svg>
            </div>
            <input
              type="text"
              aria-label="재질 이름"
              defaultValue="기본값"
              className="ml-[3px] h-[23px] min-w-0 flex-1 border-2 border-[#7d7d7d] border-r-white border-b-white bg-[#f1f1f1] pl-0.5 text-[12px] leading-5 text-[#808080]"
            />
            <div className="ml-[5px] flex w-[26px] flex-col items-center gap-2.5 pt-1">
              <ToggleIcon />
              <svg viewBox="0 0 22 22" className="h-[22px] w-[22px]" aria-hidden="true">
                <path d="M4 6L12 1L21 4V14L13 20L4 16Z" fill="#2b2b22" stroke="#000" />
                <path d="M5 6L13 2L20 4L13 8Z" fill="#b9b08c" />
                <path d="M14 12L20 8M14 16L20 12" stroke="#8d8668" strokeWidth="1.5" />
                <circle cx="6" cy="16" r="5.5" fill="#fff" stroke="#000" strokeWidth="1.3" />
                <path d="M3 16H9M6 13V19" stroke="#000" strokeWidth="1.5" />
              </svg>
              <svg viewBox="0 0 26 26" className="-mt-1 h-[26px] w-[26px]" aria-hidden="true">
                <path d="M0 0H26V26H0Z" fill="#fff" />
                <path d="M0 0L26 26H0Z" fill="#a4b0b9" />
              </svg>
            </div>
          </div>

          <div className="flex h-[30px] shrink-0 items-end pr-1 text-[12px] leading-5 text-black">
            <button type="button" className="h-[22px] w-[51px] border-t border-r-2 border-t-white border-r-[#707070] pr-3 pb-1">선택</button>
            <button type="button" className="h-5 w-[46px] border-t border-r-2 border-t-white border-r-[#707070] pr-3">편집</button>
            <button type="button" aria-label="스포이드" className="ml-auto pb-1">
              <svg viewBox="0 0 20 20" className="h-5 w-5" fill="none" aria-hidden="true">
                <path d="M1 19L4 13L11 6L14 9L7 16Z" fill="#c7c1a5" stroke="#444" />
                <path d="M2 18L4.5 13.5L7 16Z" fill="#e6a417" />
                <path d="M9 5L15 11" stroke="#222" strokeWidth="2.5" />
                <path d="M12.5 7.5L16 4" stroke="#333" strokeWidth="5" strokeLinecap="round" />
              </svg>
            </button>
          </div>
          <NavRow id="material-list" options={['색상']} />

          <div className="flex min-h-0 flex-1 bg-white pr-px">
            <div className="grid flex-1 auto-rows-[62px] grid-cols-[62px_62px_62px] content-start gap-0.5 overflow-hidden pt-0.5 pl-[3px]">
              {swatches.map((color) => (
                <button key={color} type="button" aria-label="색상 견본" className="border border-[#9a9a9a] p-px">
                  <span className={`block h-full w-full ${color}`} />
                </button>
              ))}
            </div>
            <ScrollBar />
          </div>

          <div className="mt-[3px] h-1.5 shrink-0 border-t-2 border-b border-t-[#7b7f7b] border-b-[#a8a8a8]" />
          <div className="h-[22px] shrink-0 border-b border-[#9c9c9c] bg-[#e4e3e4] pl-1 text-[12px] leading-5 text-black">선택</div>
          <NavRow id="secondary-list" options={['재질']} focused />
          <div className="flex h-[33px] shrink-0 overflow-hidden bg-white pr-px">
            <div className="grid flex-1 auto-rows-[62px] grid-cols-[62px_62px_62px] content-start gap-0.5 overflow-hidden pt-0.5 pl-[3px]">
              {[0, 1, 2].map((n) => (
                <button key={n} type="button" aria-label="재질 폴더" className="border border-[#9a9a9a]">
                  <Folder />
                </button>
              ))}
            </div>
            <ScrollBar down={false} />
          </div>
        </div>
        <div className="flex pt-0.5 pr-px">
          <ScrollBar />
        </div>
      </div>
    </aside>
  );
}

function StatusBar() {
  return (
    <footer className="flex h-[26px] shrink-0 items-center bg-[#f1f1f1] pl-1.5 text-black">
      <div className="flex gap-[17px] pt-1.5">
        <button type="button" aria-label="위치">
          <svg viewBox="0 0 18 18" className="h-[18px] w-[18px]" fill="none" aria-hidden="true">
            <circle cx="9" cy="9" r="8" stroke="#999" strokeWidth="1.3" />
            <path d="M9 15C7 11 5.5 9 5.5 6.5a3.5 3.5 0 0 1 7 0C12.5 9 11 11 9 15Z" fill="#999" />
          </svg>
        </button>
        <button type="button" aria-label="제작자">
          <svg viewBox="0 0 18 18" className="h-[18px] w-[18px]" fill="none" aria-hidden="true">
            <circle cx="9" cy="9" r="8" stroke="#000" strokeWidth="1.6" />
            <circle cx="9" cy="4.5" r="1.6" fill="#000" />
            <path d="M6 7H12V8L10.5 8.5V14.5H7.5V8.5L6 8Z" fill="#000" />
          </svg>
        </button>
        <button type="button" aria-label="로그인">
          <svg viewBox="0 0 18 18" className="h-[18px] w-[18px]" fill="none" aria-hidden="true">
            <circle cx="9" cy="9" r="8" stroke="#999" strokeWidth="1.3" />
            <circle cx="9" cy="6.5" r="3.5" fill="#999" />
            <path d="M3 14C4 10 14 10 15 14C12 18 6 18 3 14Z" fill="#999" />
          </svg>
        </button>
      </div>
      <div className="mt-1 ml-3 h-3.5 w-px bg-[#8c8c8c]" />
      <p className="ml-3 flex-1 pt-1.5 text-[17px] leading-5">돌출 처리할 면을 끕니다. Alt = 면 주변</p>
      <div className="mt-1 h-3.5 w-px bg-[#8c8c8c]" />
      <label htmlFor="measurement" className="ml-2.5 pt-1.5 text-[17px] leading-5">거리</label>
      <input id="measurement" type="text" className="mt-1 mr-[5px] ml-2.5 h-[22px] w-[250px] border border-b-0 border-[#a9b7c9] bg-[#f1f1f1]" />
    </footer>
  );
}

function App() {
  return (
    <div className="flex h-screen flex-col overflow-hidden bg-white pt-9 pb-11 font-['Noto_Sans_CJK_KR',sans-serif]">
      <nav className="flex h-7 shrink-0 items-center gap-[13px] pt-2 pb-0.5 pl-[7px] text-[16px] leading-[18px] text-black">
        {menus.map((menu) => (
          <button key={menu} type="button">{menu}</button>
        ))}
      </nav>
      <Toolbar />
      <div className="relative flex min-h-0 flex-1 border-b border-[#a8a8a8] bg-[#f1f1f1]">
        <Palette />
        <Viewport />
        <Tray />
        <div className="pointer-events-none absolute bottom-0 left-0 h-[72px] w-[1310px] bg-[#202020]/50" />
      </div>
      <StatusBar />
    </div>
  );
}

export default App;
